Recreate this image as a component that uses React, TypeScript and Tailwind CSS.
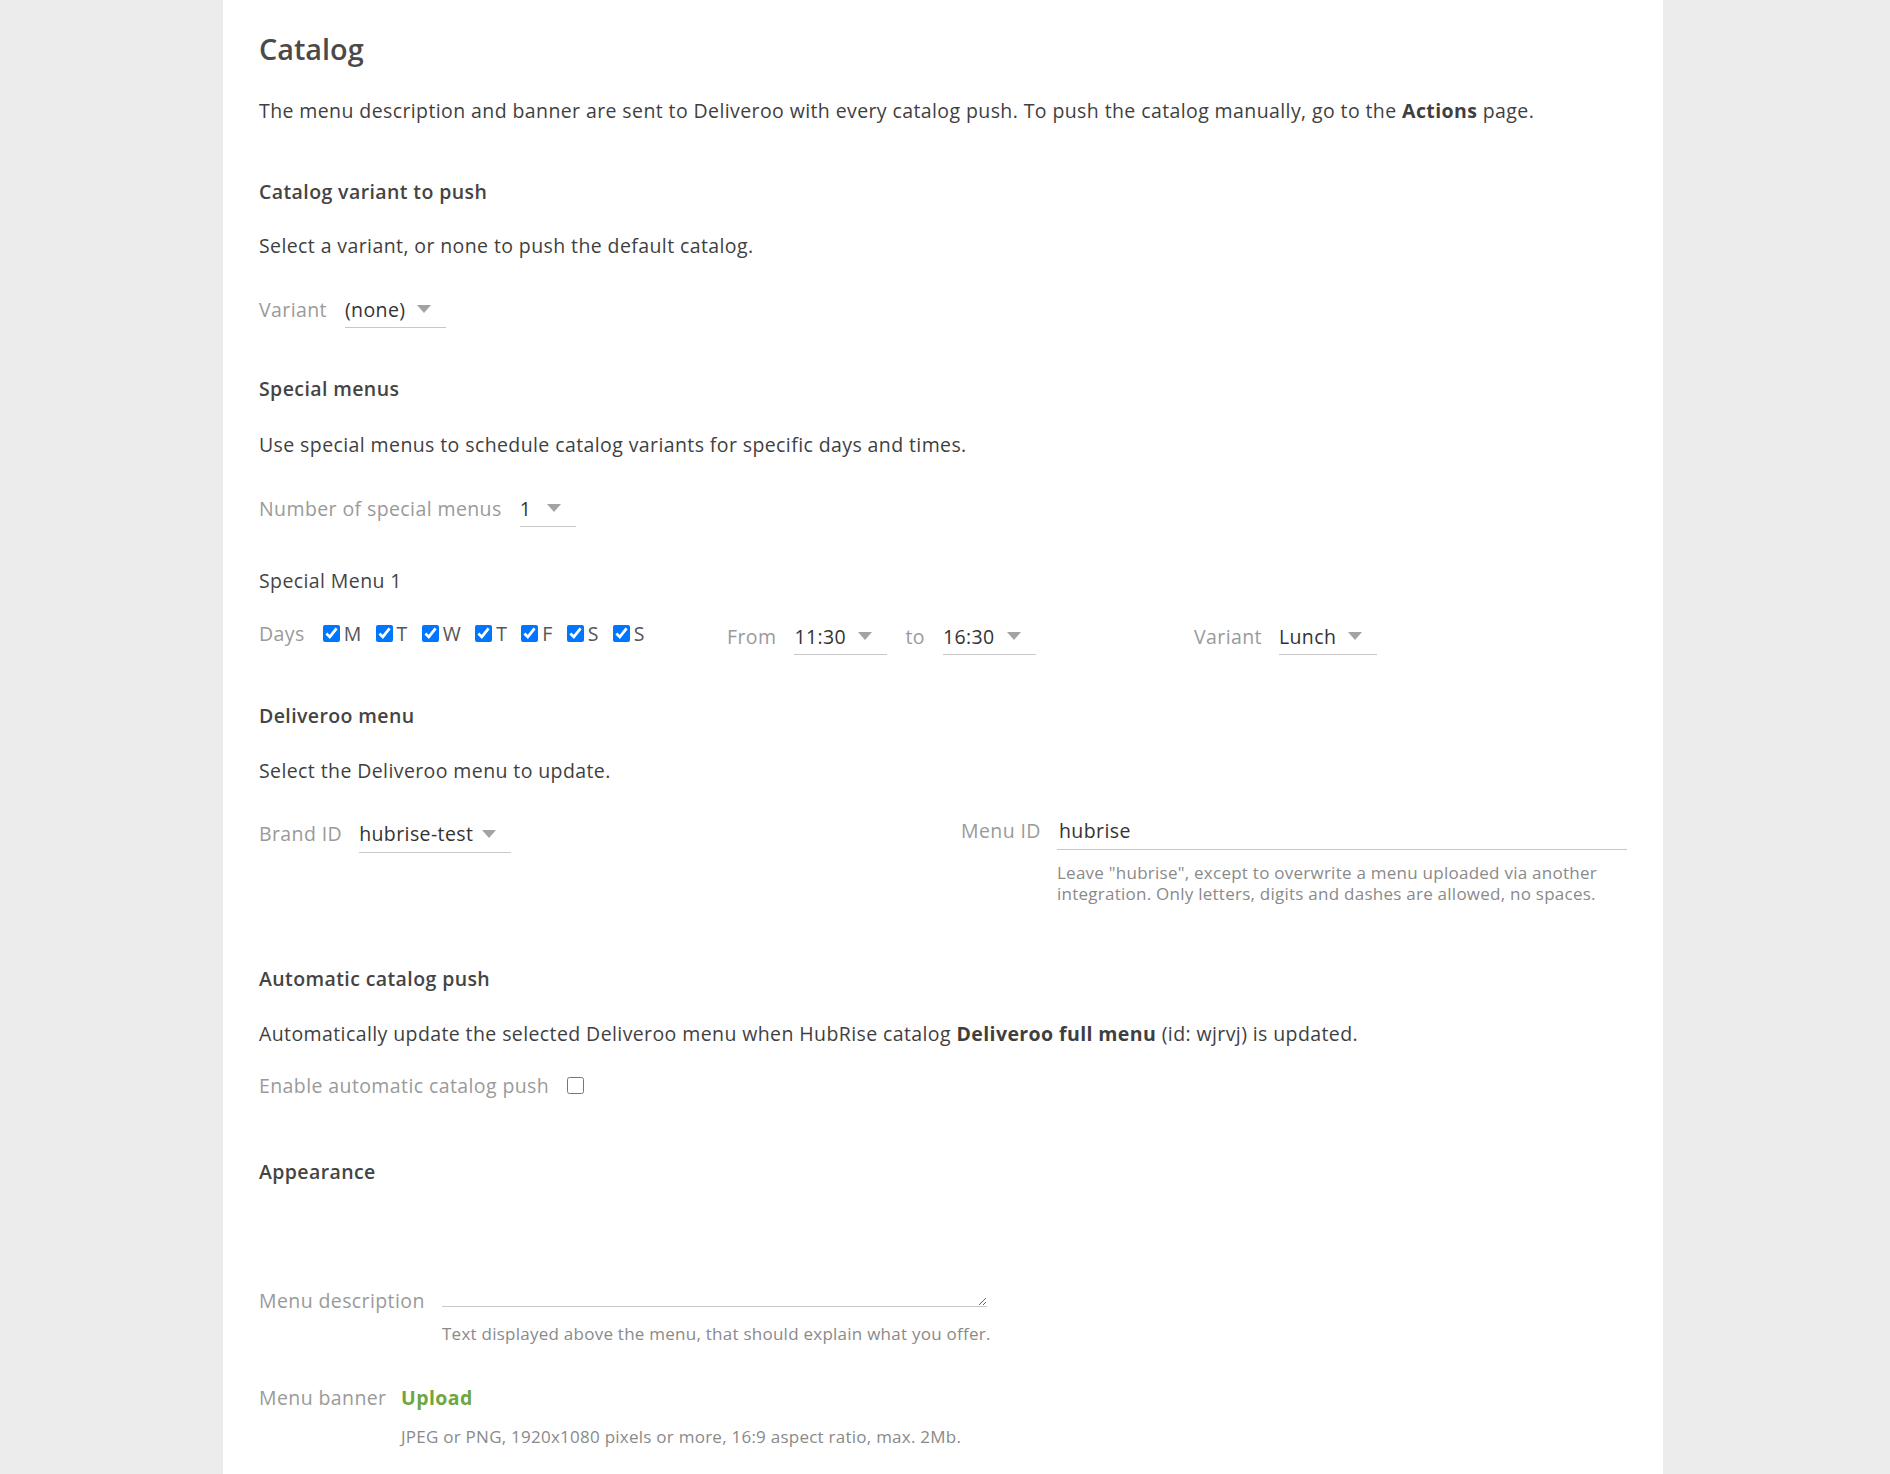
import React from "react";

function Arrow() {
  return (
    <svg width="14" height="8" viewBox="0 0 14 8" className="shrink-0">
      <polygon points="0,0 14,0 7,8" fill="#a3a3a3" />
    </svg>
  );
}

function Select({ value, className }: { value: string; className: string }) {
  return (
    <div
      className={
        "flex h-[38px] items-center justify-between border-b border-[#c8c8c8] pr-[15px] pt-[1px] text-[#333] " +
        className
      }
    >
      <span>{value}</span>
      <Arrow />
    </div>
  );
}

function Day({ letter, first }: { letter: string; first?: boolean }) {
  return (
    <label className={"flex items-center " + (first ? "ml-[18px]" : "ml-[14px]")}>
      <input type="checkbox" defaultChecked className="m-0 h-[17px] w-[17px]" />
      <span className="ml-[4px] text-[#555]">{letter}</span>
    </label>
  );
}

export default function App() {
  return (
    <div className="min-h-[1474px] bg-[#ececec] font-['Open_Sans','Liberation_Sans',sans-serif] text-[19.5px] leading-[29px] tracking-[0.4px] text-[#3f3f3f]">
      <div className="ml-[223px] min-h-[1474px] w-[1440px] bg-white px-[36px] pb-[40px] pt-[31px]">
        <h1 className="text-[28.8px] font-semibold leading-[35px] tracking-normal text-[#4a4a4a]">Catalog</h1>
        <p className="mt-[30px]">
          The menu description and banner are sent to Deliveroo with every catalog push. To push the
          catalog manually, go to the <b className="font-bold">Actions</b> page.
        </p>

        <h2 className="mt-[52px] font-semibold text-[#444]">Catalog variant to push</h2>
        <p className="mt-[25px]">Select a variant, or none to push the default catalog.</p>
        <div className="mt-[30px] flex items-center">
          <span className="text-[#9a9a9a]">Variant</span>
          <Select value="(none)" className="ml-[18px] w-[101px]" />
        </div>

        <h2 className="mt-[46px] font-semibold text-[#444]">Special menus</h2>
        <p className="mt-[27px]">Use special menus to schedule catalog variants for specific days and times.</p>
        <div className="mt-[30px] flex items-center">
          <span className="text-[#9a9a9a]">Number of special menus</span>
          <Select value="1" className="ml-[18px] w-[56px]" />
        </div>

        <div className="mt-[39px] text-[#444]">Special Menu 1</div>
        <div className="mt-[22px] grid grid-cols-[468px_467px_1fr] items-center">
          <div className="-mt-[5px] flex items-center">
            <span className="text-[#9a9a9a]">Days</span>
            <Day letter="M" first />
            <Day letter="T" />
            <Day letter="W" />
            <Day letter="T" />
            <Day letter="F" />
            <Day letter="S" />
            <Day letter="S" />
          </div>
          <div className="flex items-center">
            <span className="text-[#9a9a9a]">From</span>
            <Select value="11:30" className="ml-[18px] w-[93px]" />
            <span className="ml-[18px] text-[#9a9a9a]">to</span>
            <Select value="16:30" className="ml-[18px] w-[93px]" />
          </div>
          <div className="flex items-center">
            <span className="text-[#9a9a9a]">Variant</span>
            <Select value="Lunch" className="ml-[17px] w-[98px]" />
          </div>
        </div>

        <h2 className="mt-[46px] font-semibold text-[#444]">Deliveroo menu</h2>
        <p className="mt-[26px]">Select the Deliveroo menu to update.</p>
        <div className="mt-[26.5px] grid grid-cols-[702px_1fr] items-start">
          <div className="mt-[3px] flex items-center">
            <span className="text-[#9a9a9a]">Brand ID</span>
            <Select value="hubrise-test" className="ml-[17px] w-[152px]" />
          </div>
          <div className="flex items-start">
            <div className="flex h-[37px] w-[96px] shrink-0 items-center text-[#9a9a9a]">Menu ID</div>
            <div className="flex-1">
              <div className="flex h-[38px] items-center border-b border-[#c8c8c8] pl-[2px] text-[#333]">
                hubrise
              </div>
              <div className="mt-[12.5px] text-[17px] leading-[21px] tracking-[0.25px] text-[#8a8a8a]">
                Leave "hubrise", except to overwrite a menu uploaded via another
                <br />
                integration. Only letters, digits and dashes are allowed, no spaces.
              </div>
            </div>
          </div>
        </div>

        <h2 className="mt-[60px] font-semibold text-[#444]">Automatic catalog push</h2>
        <p className="mt-[26px]">
          Automatically update the selected Deliveroo menu when HubRise catalog{" "}
          <b className="font-bold">Deliveroo full menu</b> (id: wjrvj) is updated.
        </p>
        <div className="mt-[23px] flex items-center">
          <span className="text-[#9a9a9a]">Enable automatic catalog push</span>
          <input type="checkbox" className="m-0 ml-[18px] h-[17px] w-[17px]" />
        </div>

        <h2 className="mt-[57px] font-semibold text-[#444]">Appearance</h2>
        <div className="mt-[90px] flex items-start">
          <div className="mt-[9.5px] w-[183px] shrink-0 text-[#9a9a9a]">Menu description</div>
          <div>
            <textarea
              className="block h-[31px] w-[545px] resize-y border-0 border-b border-[#c8c8c8] p-0 outline-none"
              defaultValue=""
            />
            <div className="mt-[15.5px] text-[17px] leading-[21px] tracking-[0.25px] text-[#8a8a8a]">
              Text displayed above the menu, that should explain what you offer.
            </div>
          </div>
        </div>
        <div className="mt-[39px] flex items-start">
          <div className="w-[142px] shrink-0 text-[#9a9a9a]">Menu banner</div>
          <div>
            <div className="font-bold text-[#6ea63f]">Upload</div>
            <div className="mt-[14px] text-[17px] leading-[21px] tracking-[0.25px] text-[#8a8a8a]">
              JPEG or PNG, 1920x1080 pixels or more, 16:9 aspect ratio, max. 2Mb.
            </div>
          </div>
        </div>
      </div>
    </div>
  );
}
